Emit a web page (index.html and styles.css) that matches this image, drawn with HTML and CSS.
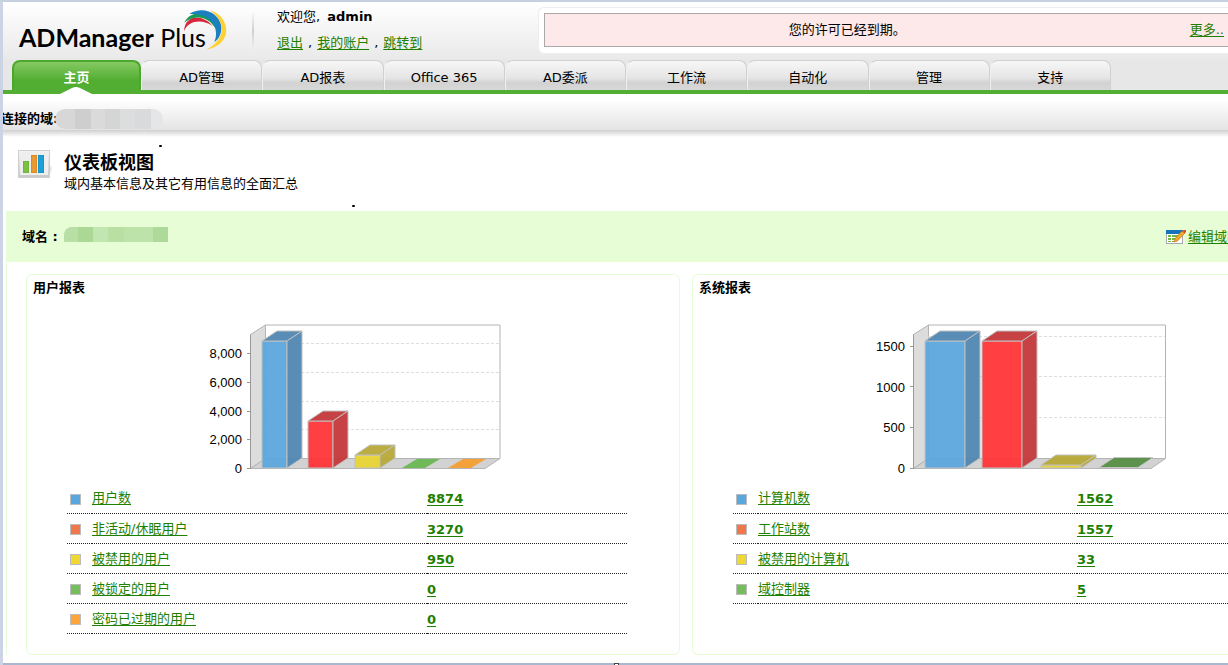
FILE: index.html
```html
<!DOCTYPE html>
<html lang="zh-CN">
<head>
<meta charset="utf-8">
<title>ADManager Plus</title>
<link rel="stylesheet" href="styles.css">
</head>
<body>
<div class="page">
  <header class="header">
    <div class="logo"><span class="logo-strong">ADManager</span> <span class="logo-light">Plus</span>
      <svg class="logo-arcs" viewBox="540 24 150 132" aria-hidden="true">
        <path fill="#d7263d" d="M552 94C554 44 606 40 638 78C608 56 564 60 552 94Z"/>
        <path fill="#159b52" d="M553 68C572 28 634 30 648 88C626 50 588 42 553 68Z"/>
        <path fill="#1b7fc0" d="M568 42C606 16 660 38 664 80C665 102 656 118 643 126C660 86 636 38 568 42Z"/>
        <path fill="#fdd038" d="M630 31C692 48 702 136 618 149C672 124 684 70 630 31Z"/>
      </svg>
    </div>
    <div class="divider"></div>
    <div class="user">
      <div class="user-line">欢迎您, <strong class="user-name">admin</strong></div>
      <div class="user-line"><a href="#">退出</a><span class="comma">,</span><a href="#">我的账户</a><span class="comma">,</span><a href="#">跳转到</a></div>
    </div>
    <div class="notice-frame">
      <div class="notice"><span class="notice-text">您的许可已经到期。</span><a href="#">更多..</a></div>
    </div>
  </header>
  <nav class="tabs">
    <a class="tab active" href="#">主页<svg class="notch" viewBox="0 0 32 7" aria-hidden="true"><path fill="#fff" d="M0 7L12 1Q16 -1 20 1L32 7Z"/></svg></a>
    <a class="tab" href="#">AD管理</a>
    <a class="tab" href="#">AD报表</a>
    <a class="tab" href="#">Office 365</a>
    <a class="tab" href="#">AD委派</a>
    <a class="tab" href="#">工作流</a>
    <a class="tab" href="#">自动化</a>
    <a class="tab" href="#">管理</a>
    <a class="tab" href="#">支持</a>
  </nav>
  <div class="connected"><strong class="connected-label">连接的域:</strong><span class="mask mask-gray"></span></div>
  <div class="connected-shadow"></div>
  <section class="intro">
    <svg class="intro-icon" viewBox="0 0 34 28" aria-hidden="true">
      <defs>
        <linearGradient id="g1" x2="0" y2="1"><stop stop-color="#f4f4f4"/><stop offset="1" stop-color="#c8c8c8"/></linearGradient>
      </defs>
      <path fill="#e4e4e4" d="M31 14L34 18L31 27Z"/>
      <rect x=".5" y=".5" width="31" height="27" fill="url(#g1)" stroke="#cfcfcf"/>
      <rect x="2" y="2" width="28" height="23" fill="#eee"/>
      <rect x="5.500" y="11.500" width="5" height="11" fill="#7cc142" stroke="#6fb53a"/>
      <rect x="13.500" y="5.500" width="5" height="17" fill="#e8992f" stroke="#d98a24"/>
      <rect x="20.500" y="5.500" width="5" height="17" fill="#1da0d8" stroke="#1494cc"/>
    </svg>
    <div>
      <h1 class="intro-title">仪表板视图</h1>
      <p class="intro-text">域内基本信息及其它有用信息的全面汇总</p>
    </div>
    <span class="speck speck-a"></span>
    <span class="speck speck-b"></span>
  </section>
  <main class="main">
    <div class="domain">
      <strong class="domain-label">域名 :</strong><span class="mask mask-green"></span>
      <div class="domain-edit">
        <svg class="edit-icon" viewBox="0 0 20 14" aria-hidden="true">
          <rect x=".5" y=".5" width="16" height="13" fill="#fff" stroke="#a9a9b4"/>
          <rect width="17" height="4" fill="#1673ba"/>
          <path fill="#72b944" d="M2 5h3v2H2zM6 5h6v2H6zM2 8h3v2H2zM6 8h5v2H6zM2 11h3v1H2zM6 11h3v1H6z"/>
          <path fill="#f3a72b" stroke="#b86f14" stroke-width=".6" d="M8 12L9 8.500L16 1L19 3L11.500 11Z"/>
          <path fill="#d9531e" d="M16 1L18 0L20 0V2L18.500 3.500Z"/>
        </svg>
        <a href="#">编辑域明细</a>
      </div>
    </div>
    <div class="panels">
      <section class="panel panel-users">
        <h2 class="panel-title">用户报表</h2>
        <svg class="chart" viewBox="0 0 330 170" role="img" aria-label="用户报表">
          <path class="wall" d="M60.500 24.500L75.500 15V148.500L60.500 158.500Z"/>
          <path class="floor" d="M60.500 158.500L75.500 148.500H310L295 158.500Z"/>
          <path class="back" d="M75.500 15H310V148.500H75.500Z"/>
          <path class="grid" d="M76 33.500H310M76 62.500H310M76 91.500H310M76 119.500H310M61 43L76 33M61 72L76 62M61 101L76 91M61 129L76 119"/>
          <path class="axis" d="M60.500 24.500V158.500M57 43.500H61M57 72.500H61M57 101.500H61M57 129.500H61M57 158.500H61"/>
          <g class="axis-text"><text x="52" y="48">8,000</text><text x="52" y="77">6,000</text><text x="52" y="106">4,000</text><text x="52" y="134">2,000</text><text x="52" y="163">0</text></g>
          <g class="bar"><path fill="#5aa6de" d="M72 31H97V158H72Z"/><path fill="#4f86b0" d="M72 31L87 21H112L97 31Z"/><path fill="#4f86b0" d="M97 31L112 21V148L97 158Z"/></g>
          <g class="bar"><path fill="#ff3336" d="M118 111H143V158H118Z"/><path fill="#c23639" d="M118 111L133 101H158L143 111Z"/><path fill="#c23639" d="M143 111L158 101V148L143 158Z"/></g>
          <g class="bar"><path fill="#e9d534" d="M165 145H190V158H165Z"/><path fill="#b8a837" d="M165 145L180 135H205L190 145Z"/><path fill="#b8a837" d="M190 145L205 135V148L190 158Z"/></g>
          <path fill="#70b95a" d="M212 158L227 149H250L235 158Z"/>
          <path fill="#f3a23b" d="M258 158L273 149H296L281 158Z"/>
        </svg>
        <table class="stats">
          <tr><td class="key"><span class="swatch blue"></span></td><td class="name"><a href="#">用户数</a></td><td><a class="count" href="#">8874</a></td></tr>
          <tr><td class="key"><span class="swatch red"></span></td><td class="name"><a href="#">非活动/休眠用户</a></td><td><a class="count" href="#">3270</a></td></tr>
          <tr><td class="key"><span class="swatch yellow"></span></td><td class="name"><a href="#">被禁用的用户</a></td><td><a class="count" href="#">950</a></td></tr>
          <tr><td class="key"><span class="swatch green"></span></td><td class="name"><a href="#">被锁定的用户</a></td><td><a class="count" href="#">0</a></td></tr>
          <tr><td class="key"><span class="swatch orange"></span></td><td class="name"><a href="#">密码已过期的用户</a></td><td><a class="count" href="#">0</a></td></tr>
        </table>
      </section>
      <section class="panel panel-systems">
        <h2 class="panel-title">系统报表</h2>
        <svg class="chart" viewBox="0 0 330 170" role="img" aria-label="系统报表">
          <path class="wall" d="M53.500 24.500L68.500 15V148.500L53.500 158.500Z"/>
          <path class="floor" d="M53.500 158.500L68.500 148.500H305.500L291 158.500Z"/>
          <path class="back" d="M68.500 15H305.500V148.500H68.500Z"/>
          <path class="grid" d="M69 26.500H305M69 66.500H305M69 107.500H305M54 36L69 26M54 76L69 66M54 117L69 107"/>
          <path class="axis" d="M53.500 24.500V158.500M50 36.500H54M50 76.500H54M50 117.500H54M50 158.500H54"/>
          <g class="axis-text"><text x="45" y="41">1500</text><text x="45" y="82">1000</text><text x="45" y="122">500</text><text x="45" y="163">0</text></g>
          <g class="bar"><path fill="#5aa6de" d="M65 31H105V158H65Z"/><path fill="#4f86b0" d="M65 31L80 21H120L105 31Z"/><path fill="#4f86b0" d="M105 31L120 21V148L105 158Z"/></g>
          <g class="bar"><path fill="#ff3336" d="M122 31H162V158H122Z"/><path fill="#c23639" d="M122 31L137 21H177L162 31Z"/><path fill="#c23639" d="M162 31L177 21V148L162 158Z"/></g>
          <g class="bar"><path fill="#e9d534" d="M181 155H221V158H181Z"/><path fill="#b8a837" d="M181 155L196 145H236L221 155Z"/><path fill="#b8a837" d="M221 155L236 145V148L221 158Z"/></g>
          <path fill="#5c924c" stroke="#c4c4c4" d="M239 157.500L254 147.500H293L278 157.500Z"/>
        </svg>
        <table class="stats">
          <tr><td class="key"><span class="swatch blue"></span></td><td class="name"><a href="#">计算机数</a></td><td><a class="count" href="#">1562</a></td></tr>
          <tr><td class="key"><span class="swatch red"></span></td><td class="name"><a href="#">工作站数</a></td><td><a class="count" href="#">1557</a></td></tr>
          <tr><td class="key"><span class="swatch yellow"></span></td><td class="name"><a href="#">被禁用的计算机</a></td><td><a class="count" href="#">33</a></td></tr>
          <tr><td class="key"><span class="swatch green"></span></td><td class="name"><a href="#">域控制器</a></td><td><a class="count" href="#">5</a></td></tr>
        </table>
      </section>
    </div>
  </main>
  <footer class="edge"><span class="handle"></span></footer>
</div>
</body>
</html>
```
FILE: styles.css
```css
* { box-sizing: border-box; }
body {
  margin: 0;
  background: #fff;
  color: #000;
  font: 13px/18px "DejaVu Sans", "Noto Sans CJK SC", sans-serif;
  overflow: hidden;
}
a { color: #1f7f00; white-space: nowrap; text-underline-offset: 2px; }
.page {
  display: flex;
  flex-direction: column;
  min-height: 100vh;
  border-left: 3px solid #cbd3e4;
  border-top: 2px solid #c6d0e1;
  overflow: hidden;
}

.header {
  display: flex;
  align-items: flex-start;
  height: 58px;
  padding: 5px 0 0 16px;
  background: linear-gradient(#fff, #e9e9e9);
}
.logo {
  position: relative;
  flex: none;
  width: 208px;
  padding-top: 14px;
  font: 25px/32px Lato, sans-serif;
  white-space: nowrap;
}
.logo-strong { font-weight: 700; }
.logo-light { font-weight: 400; }
.logo-arcs { position: absolute; left: 161px; top: 1px; width: 50px; height: 44px; }
.divider {
  flex: none;
  width: 2px;
  height: 36px;
  margin: 6px 0 0 25px;
  background: linear-gradient(#f6f6f6, #cfcfcf, #f0f0f0);
}
.user { flex: none; width: 284px; padding: 1px 0 0 23px; }
.user-line { height: 26px; white-space: nowrap; }
.user-name { margin-left: 3px; }
.comma { margin: 0 5px; }
.notice-frame {
  flex: 1;
  padding: 5px 0 6px 5px;
  background: #fff;
  border: 1px solid #eee;
  border-right: 0;
  border-radius: 6px 0 0 6px;
}
.notice {
  display: flex;
  align-items: center;
  height: 34px;
  padding-right: 4px;
  background: #fde8ea;
  border: 1px solid #a9a9a9;
  border-right: 0;
}
.notice-text { flex: 1; padding-right: 40px; text-align: center; }

.tabs {
  display: flex;
  height: 34px;
  padding: 0 117px 0 9px;
  background: #e7e7e7;
  border-bottom: 4px solid #53ae34;
}
.tab {
  flex: 1 1 0;
  padding-top: 8px;
  height: 30px;
  color: #000;
  text-align: center;
  text-decoration: none;
  background: linear-gradient(#f7f7f7, #e4e4e4 60%, #d2d2d2 75%, #d8d8d8);
  border: 1px solid #d0d0d0;
  border-left-color: #f0f0f0;
  border-bottom: 0;
  border-radius: 8px 8px 0 0;
}
.tab.active {
  position: relative;
  flex: 0 0 129px;
  color: #fff;
  font-weight: 700;
  background: linear-gradient(#86c962, #52ae32 65%);
  border: 2px solid #4ca82d;
  border-bottom: 0;
  padding-top: 7px;
}
.notch { position: absolute; left: 46px; bottom: -4px; width: 32px; height: 7px; }

.connected {
  display: flex;
  align-items: center;
  height: 36px;
  padding-top: 13px;
  background: linear-gradient(#fff 15%, #e4e4e4);
}
.connected-label { width: 54px; margin-left: -2px; white-space: nowrap; }
.connected-shadow { height: 7px; background: linear-gradient(#cfcfcf, #fff); }
.mask { display: inline-block; }
.mask-gray {
  width: 108px;
  height: 20px;
  border-radius: 10px;
  background: linear-gradient(90deg, #d7d7d8 20px, #cecece 20px 36px, #dadada 36px 50px, #d5d5d6 50px 65px, #dcdddd 65px 80px, #d8dadb 80px 96px, #e6e6e6 96px);
}

.intro {
  position: relative;
  display: flex;
  gap: 12px;
  height: 74px;
  padding: 13px 0 0 15px;
}
.intro-icon { width: 34px; height: 28px; }
.intro-title { margin: 0; padding-top: 1px; font-size: 18px; line-height: 24px; }
.intro-text { margin: 0; }
.speck { position: absolute; width: 3px; height: 2px; background: #000; border-radius: 1px; }
.speck-a { left: 156px; top: 8px; }
.speck-b { left: 349px; top: 68px; }

.main { margin-left: 3px; border-left: 1px solid #e6fdd9; }
.domain {
  display: flex;
  align-items: center;
  height: 51px;
  padding-left: 15px;
  background: #e6fdd5;
}
.domain-label { width: 42px; white-space: nowrap; }
.mask-green {
  width: 104px;
  height: 15px;
  margin-bottom: 5px;
  border-radius: 8px 0 0 0;
  background: linear-gradient(90deg, #b8dfa5 14px, #acd895 14px 29px, #c1e6b1 29px 44px, #b9dfa3 44px 60px, #bde3aa 60px 89px, #add99b 89px);
}
.domain-edit {
  display: flex;
  align-items: center;
  gap: 2px;
  width: 62px;
  margin-left: auto;
  overflow: hidden;
}
.edit-icon { flex: none; width: 20px; height: 14px; }

.panels {
  display: grid;
  grid-template-columns: 654fr 536fr;
  gap: 12px;
  padding: 12px 0 0 19px;
}
.panel {
  padding: 4px 0 20px;
  border: 1px solid #e6fdd5;
  border-radius: 6px;
}
.panel-systems { border-right: 0; border-radius: 6px 0 0 6px; }
.panel-title { margin: 0 0 13px 6px; font-size: 13px; line-height: 18px; }
.chart { display: block; width: 330px; height: 170px; }
.panel-users .chart { margin-left: 163px; }
.panel-systems .chart { margin-left: 167px; }
.wall { fill: #dcdcdc; stroke: #b4b4b4; }
.floor { fill: #d2d2d2; stroke: #b4b4b4; }
.back { fill: none; stroke: #b4b4b4; }
.grid { fill: none; stroke: #dedede; stroke-dasharray: 3 2; }
.axis { fill: none; stroke: #999; }
.axis-text { font: 13px "Liberation Sans", sans-serif; fill: #000; text-anchor: end; }
.bar path { stroke: #c0c0c0; stroke-width: 1; fill-opacity: .94; }

.stats {
  width: calc(100% - 92px);
  margin: 3px 0 0 40px;
  border-collapse: collapse;
  table-layout: fixed;
}
.panel-systems .stats { width: calc(100% - 40px); }
.stats td { height: 30px; padding: 3px 0 0; border-bottom: 1px dotted #222; }
.stats .key { width: 25px; padding-left: 3px; }
.stats .name { width: 335px; padding-top: 1px; }
.panel-systems .name { width: 319px; }
.swatch { display: block; width: 11px; height: 11px; border: 1px solid #bcbcbc; }
.blue { background: #5aa6de; }
.red { background: #f0764d; }
.yellow { background: #f0d834; }
.green { background: #76bd5d; }
.orange { background: #fca63a; }
.count { font-weight: 700; }

.edge { position: relative; height: 2px; margin: auto 0 0 -3px; background: #aab8cf; }
.handle { position: absolute; left: 614px; top: 0; width: 5px; height: 2px; background: #fff; border: 1px solid #444; border-bottom: 0; }
```
